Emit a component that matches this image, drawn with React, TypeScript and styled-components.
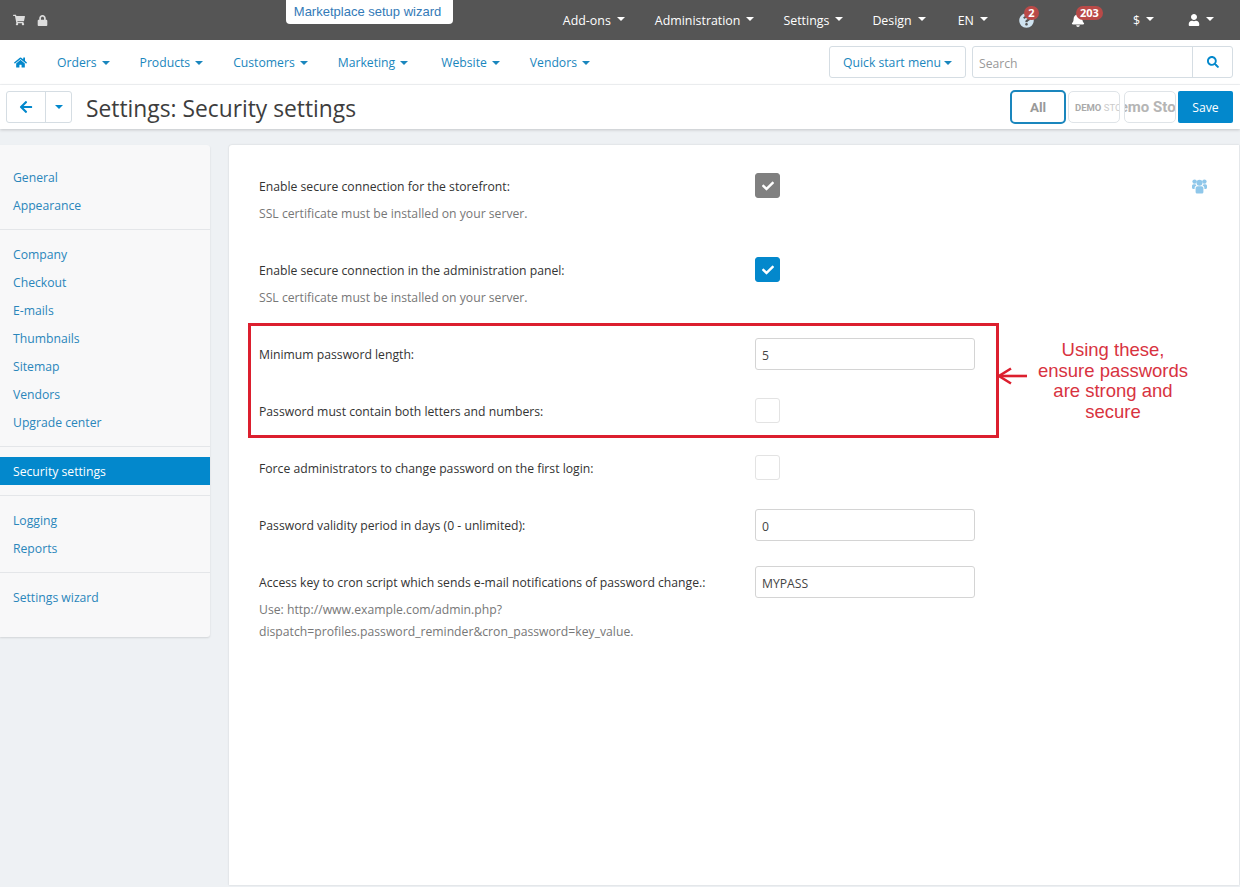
import React from 'react';
import styled, { createGlobalStyle } from 'styled-components';
import {
    FaArrowLeft,
    FaBell,
    FaCheck,
    FaHome,
    FaLock,
    FaQuestionCircle,
    FaSearch,
    FaShoppingCart,
    FaUser,
} from 'react-icons/fa';

const Global = createGlobalStyle`
    html, body {
        margin: 0;
        padding: 0;
        background: #eef1f4;
    }
    body {
        font-family: "Open Sans", "Liberation Sans", sans-serif;
        font-size: 12.2px;
        color: #333;
        width: 1240px;
        height: 887px;
        overflow: hidden;
    }
    * {
        box-sizing: border-box;
    }
`;

const BLUE = '#0388cc';

const Caret = styled.i<{ $color?: string }>`
    display: inline-block;
    width: 0;
    height: 0;
    margin-left: 5px;
    border-left: 4.5px solid transparent;
    border-right: 4.5px solid transparent;
    border-top: 4px solid ${(p) => p.$color || 'currentColor'};
    vertical-align: 2px;
`;

const TopBar = styled.div`
    height: 40px;
    background: #555;
    color: #fff;
    display: flex;
    align-items: center;
    padding: 0 26px 0 13px;
`;

const TopIcons = styled.div`
    display: flex;
    align-items: center;
    gap: 12px;
    width: 273px;
    color: #ddd;
    font-size: 12px;
`;

const WizardTab = styled.a`
    align-self: flex-start;
    width: 167px;
    height: 24px;
    padding-right: 4px;
    background: #fff;
    border-radius: 0 0 4px 4px;
    color: #337ab7;
    font-family: "Liberation Sans", Arial, sans-serif;
    font-size: 13px;
    line-height: 24px;
    text-align: center;
`;

const TopMenu = styled.div`
    margin-left: auto;
    display: flex;
    align-items: center;
`;

const TopItem = styled.span<{ $gap: number }>`
    position: relative;
    margin-left: ${(p) => p.$gap}px;
    display: flex;
    align-items: center;
    white-space: nowrap;
    font-size: 12.4px;
    ${Caret} {
        margin-left: 6px;
        margin-top: -3px;
        vertical-align: 0;
    }
`;

const Badge = styled.b<{ $left: number }>`
    position: absolute;
    top: -7px;
    left: ${(p) => p.$left}px;
    height: 14px;
    min-width: 15px;
    padding: 0 4px;
    border-radius: 8px;
    background: #b94a48;
    color: #fff;
    font-size: 11px;
    line-height: 14px;
    text-align: center;
`;

const NavBar = styled.div`
    height: 45px;
    background: #fff;
    border-bottom: 1px solid #f1f3f5;
    display: flex;
    align-items: center;
    padding: 0 7px 0 14px;
`;

const NavLinks = styled.div`
    display: flex;
    align-items: center;
    gap: 30px;
    color: ${BLUE};
    svg {
        font-size: 13px;
        display: block;
    }
`;

const NavLink = styled.a<{ $extra: number }>`
    margin-right: ${(p) => p.$extra}px;
    white-space: nowrap;
    color: #1a86bd;
`;

const QuickStart = styled.button`
    margin-left: auto;
    width: 137px;
    height: 32px;
    background: #fff;
    border: 1px solid #d5dde3;
    border-radius: 3px;
    color: #1a86bd;
    font: inherit;
    padding: 0;
    ${Caret} {
        margin-left: 3px;
    }
`;

const SearchBox = styled.div`
    margin-left: 6px;
    width: 261px;
    height: 32px;
    border: 1px solid #d5dde3;
    border-radius: 3px;
    display: flex;
`;

const SearchInput = styled.div`
    flex: 1;
    padding-left: 6px;
    line-height: 33px;
    color: #999;
`;

const SearchButton = styled.div`
    width: 40px;
    border-left: 1px solid #d5dde3;
    color: ${BLUE};
    display: flex;
    align-items: center;
    justify-content: center;
    font-size: 12px;
`;

const ToolBar = styled.div`
    height: 44px;
    background: #fff;
    box-shadow: 0 1px 3px rgba(0, 0, 0, 0.18);
    display: flex;
    align-items: center;
    padding: 0 7px 0 6px;
`;

const BackGroup = styled.div`
    width: 66px;
    height: 32px;
    border: 1px solid #d5dde3;
    border-radius: 3px;
    display: flex;
    color: ${BLUE};
`;

const BackPart = styled.div<{ $wide?: boolean }>`
    display: flex;
    align-items: center;
    justify-content: center;
    width: ${(p) => (p.$wide ? '39px' : '26px')};
    border-left: ${(p) => (p.$wide ? 'none' : '1px solid #d5dde3')};
    font-size: 14px;
    ${Caret} {
        margin: 0;
    }
`;

const Title = styled.h1`
    margin: 3px 0 0 14px;
    font-size: 22.8px;
    font-weight: 400;
    color: #3d3d3d;
    white-space: nowrap;
`;

const Stores = styled.div`
    margin-left: auto;
    display: flex;
    align-items: center;
    font-family: Roboto, "Liberation Sans", sans-serif;
`;

const AllStores = styled.div`
    width: 56px;
    height: 34px;
    border: 2px solid #1a86bd;
    border-radius: 5px;
    color: #999;
    font-size: 13.5px;
    font-weight: 700;
    line-height: 30px;
    text-align: center;
`;

const StoreChip = styled.div<{ $gap: number }>`
    margin-left: ${(p) => p.$gap}px;
    width: 52px;
    height: 32px;
    border: 1px solid #dfe4e8;
    border-radius: 5px;
    overflow: hidden;
    white-space: nowrap;
    display: flex;
    align-items: center;
`;

const LogoSmall = styled.span`
    padding-left: 6px;
    color: #aaa;
    font-size: 9.5px;
    font-weight: 700;
    em {
        font-style: normal;
        font-weight: 400;
        color: #ccc;
    }
`;

const LogoLarge = styled.span`
    margin-left: -15px;
    color: #b5b5b5;
    font-size: 15px;
    font-weight: 700;
`;

const SaveButton = styled.button`
    margin-left: 2px;
    width: 55px;
    height: 32px;
    background: ${BLUE};
    border: none;
    border-radius: 2px;
    color: #fff;
    font-family: "Open Sans", sans-serif;
    font-size: 12.2px;
    padding: 0;
`;

const Body = styled.div`
    display: flex;
    align-items: flex-start;
    gap: 19px;
    padding: 16px 1px 0 0;
`;

const Sidebar = styled.div`
    width: 210px;
    flex: none;
    padding: 18px 0 26px;
    background: #f8f8f9;
    border-radius: 0 3px 3px 0;
    box-shadow: 0 1px 2px rgba(0, 0, 0, 0.12);
`;

const SideLink = styled.a<{ $active?: boolean }>`
    display: block;
    height: 28px;
    line-height: 29px;
    padding-left: 13px;
    color: ${(p) => (p.$active ? '#fff' : '#2a86bb')};
    background: ${(p) => (p.$active ? BLUE : 'transparent')};
`;

const Divider = styled.hr`
    margin: 10px 0;
    height: 1px;
    border: none;
    background: #e4e6e9;
`;

const Main = styled.div`
    position: relative;
    flex: 1;
    height: 740px;
    padding: 28px 31px 0 30px;
    background: #fff;
    border-radius: 3px 0 0 0;
    box-shadow: 0 0 2px rgba(0, 0, 0, 0.16);
`;

const Field = styled.div<{ $top?: number }>`
    display: flex;
    align-items: center;
    margin-top: ${(p) => p.$top || 0}px;
`;

const Label = styled.div<{ $low?: boolean }>`
    width: 496px;
    flex: none;
    padding-top: ${(p) => (p.$low ? 2 : 0)}px;
    color: #333;
    white-space: nowrap;
`;

const Check = styled.div<{ $state?: 'grey' | 'blue' }>`
    width: 25px;
    height: 25px;
    border-radius: 3px;
    display: flex;
    align-items: center;
    justify-content: center;
    color: #fff;
    font-size: 12px;
    background: ${(p) => (p.$state === 'grey' ? '#808080' : p.$state === 'blue' ? BLUE : '#fff')};
    border: 1px solid ${(p) => (p.$state === 'grey' ? '#808080' : p.$state === 'blue' ? BLUE : '#e3e3e3')};
`;

const TextInput = styled.div`
    width: 220px;
    height: 32px;
    padding-left: 6px;
    line-height: 33px;
    border: 1px solid #d4d4d4;
    border-radius: 3px;
    color: #444;
`;

const Help = styled.div<{ $top: number }>`
    margin-top: ${(p) => p.$top}px;
    color: #777;
    line-height: 22px;
`;

const GroupIcon = styled.svg`
    margin-left: auto;
    margin-right: 1px;
    color: #8fc7ea;
`;

const RedBox = styled.div`
    position: absolute;
    left: 19px;
    top: 178px;
    width: 751px;
    height: 115px;
    border: 3px solid #dc1f2e;
`;

const Arrow = styled.svg`
    position: absolute;
    left: 767px;
    top: 222px;
`;

const Callout = styled.div`
    position: absolute;
    left: 794px;
    top: 195px;
    width: 180px;
    color: #d8333f;
    font-family: "Liberation Sans", Arial, sans-serif;
    font-size: 18.5px;
    line-height: 20.7px;
    text-align: center;
`;

const topItems = [
    { name: 'Add-ons', gap: 0 },
    { name: 'Administration', gap: 30 },
    { name: 'Settings', gap: 29 },
    { name: 'Design', gap: 29 },
    { name: 'EN', gap: 32 },
];
const navItems = ['Orders', 'Products', 'Customers', 'Marketing', 'Website', 'Vendors'];
const sideGroups = [
    ['General', 'Appearance'],
    ['Company', 'Checkout', 'E-mails', 'Thumbnails', 'Sitemap', 'Vendors', 'Upgrade center'],
    ['Security settings'],
    ['Logging', 'Reports'],
    ['Settings wizard'],
];

const App: React.FC = () => {
    return (
        <>
            <Global />
            <TopBar>
                <TopIcons>
                    <FaShoppingCart />
                    <FaLock size={11} />
                </TopIcons>
                <WizardTab>Marketplace setup wizard</WizardTab>
                <TopMenu>
                    {topItems.map((item) => (
                        <TopItem key={item.name} $gap={item.gap}>
                            {item.name}
                            <Caret />
                        </TopItem>
                    ))}
                    <TopItem $gap={31}>
                        <FaQuestionCircle size={15} color="#cfe3f0" />
                        <Badge $left={5}>2</Badge>
                    </TopItem>
                    <TopItem $gap={37}>
                        <FaBell size={14} />
                        <Badge $left={5}>203</Badge>
                    </TopItem>
                    <TopItem $gap={48}>
                        $<Caret />
                    </TopItem>
                    <TopItem $gap={34}>
                        <FaUser size={12} />
                        <Caret />
                    </TopItem>
                </TopMenu>
            </TopBar>
            <NavBar>
                <NavLinks>
                    <FaHome />
                    {navItems.map((item) => (
                        <NavLink key={item} $extra={item === 'Marketing' ? 3 : 0}>
                            {item}
                            <Caret />
                        </NavLink>
                    ))}
                </NavLinks>
                <QuickStart>
                    Quick start menu
                    <Caret />
                </QuickStart>
                <SearchBox>
                    <SearchInput>Search</SearchInput>
                    <SearchButton>
                        <FaSearch />
                    </SearchButton>
                </SearchBox>
            </NavBar>
            <ToolBar>
                <BackGroup>
                    <BackPart $wide>
                        <FaArrowLeft />
                    </BackPart>
                    <BackPart>
                        <Caret />
                    </BackPart>
                </BackGroup>
                <Title>Settings: Security settings</Title>
                <Stores>
                    <AllStores>All</AllStores>
                    <StoreChip $gap={2}>
                        <LogoSmall>
                            DEMO <em>STORE</em>
                        </LogoSmall>
                    </StoreChip>
                    <StoreChip $gap={4}>
                        <LogoLarge>Demo Store</LogoLarge>
                    </StoreChip>
                    <SaveButton>Save</SaveButton>
                </Stores>
            </ToolBar>
            <Body>
                <Sidebar>
                    {sideGroups.map((group, i) => (
                        <React.Fragment key={group[0]}>
                            {i > 0 && <Divider />}
                            {group.map((link) => (
                                <SideLink key={link} $active={link === 'Security settings'}>
                                    {link}
                                </SideLink>
                            ))}
                        </React.Fragment>
                    ))}
                </Sidebar>
                <Main>
                    <Field>
                        <Label $low>Enable secure connection for the storefront:</Label>
                        <Check $state="grey">
                            <FaCheck />
                        </Check>
                        <GroupIcon width="15" height="16" viewBox="0 0 15 16" fill="currentColor">
                            <circle cx="7.5" cy="4.8" r="3" />
                            <circle cx="2.6" cy="3.6" r="2.2" />
                            <circle cx="12.4" cy="3.6" r="2.2" />
                            <path d="M3.6 10.5c0-1.6 1-2.3 2-2.3h3.8c1 0 2 .7 2 2.3V14c0 1-.8 1.6-1.6 1.6H5.2c-.8 0-1.6-.6-1.6-1.6z" />
                            <path d="M0 8c0-1 .7-1.8 1.6-1.8h1.9c.2.6.5 1 1 1.4-1.2.4-1.9 1.4-1.9 2.8v.6H1.2C.5 11 0 10.5 0 9.8zM15 8c0-1-.7-1.8-1.6-1.8h-1.9c-.2.6-.5 1-1 1.4 1.2.4 1.9 1.4 1.9 2.8v.6h1.4c.7 0 1.2-.5 1.2-1.2z" />
                        </GroupIcon>
                    </Field>
                    <Help $top={5}>SSL certificate must be installed on your server.</Help>
                    <Field $top={32}>
                        <Label $low>Enable secure connection in the administration panel:</Label>
                        <Check $state="blue">
                            <FaCheck />
                        </Check>
                    </Field>
                    <Help $top={5}>SSL certificate must be installed on your server.</Help>
                    <Field $top={29}>
                        <Label>Minimum password length:</Label>
                        <TextInput>5</TextInput>
                    </Field>
                    <Field $top={28}>
                        <Label $low>Password must contain both letters and numbers:</Label>
                        <Check />
                    </Field>
                    <Field $top={32}>
                        <Label $low>Force administrators to change password on the first login:</Label>
                        <Check />
                    </Field>
                    <Field $top={29}>
                        <Label>Password validity period in days (0 - unlimited):</Label>
                        <TextInput>0</TextInput>
                    </Field>
                    <Field $top={25}>
                        <Label>Access key to cron script which sends e-mail notifications of password change.:</Label>
                        <TextInput>MYPASS</TextInput>
                    </Field>
                    <Help $top={1}>
                        Use: http://www.example.com/admin.php?
                        <br />
                        dispatch=profiles.password_reminder&amp;cron_password=key_value.
                    </Help>
                    <RedBox />
                    <Arrow width="32" height="18" viewBox="0 0 32 18">
                        <path d="M31 9H3" fill="none" stroke="#dc1f2e" strokeWidth="2.6" />
                        <path d="M15 1.5L3 9l12 7.5" fill="none" stroke="#dc1f2e" strokeWidth="2.6" />
                    </Arrow>
                    <Callout>
                        Using these,
                        <br />
                        ensure passwords
                        <br />
                        are strong and
                        <br />
                        secure
                    </Callout>
                </Main>
            </Body>
        </>
    );
};

export default App;
